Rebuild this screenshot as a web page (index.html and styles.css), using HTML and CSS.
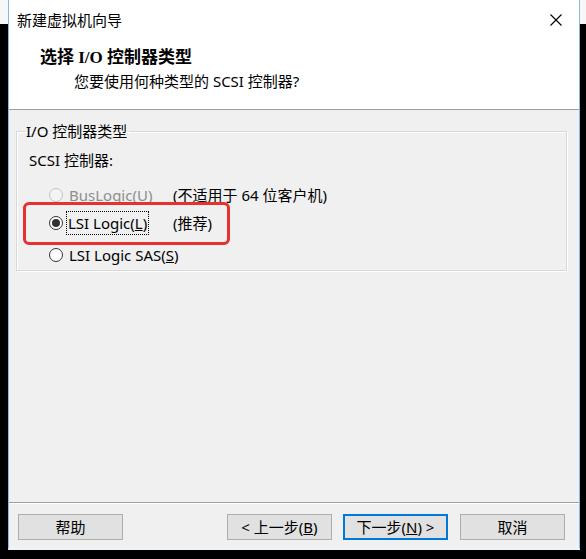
FILE: index.html
```html
<!DOCTYPE html>
<html lang="zh-CN">
<head>
<meta charset="utf-8">
<title>新建虚拟机向导</title>
<link rel="stylesheet" href="styles.css">
</head>
<body>
<div class="window">
  <div class="titlebar">
    <span class="title">新建虚拟机向导</span>
    <span class="close">
      <svg width="12" height="12" viewBox="0 0 12 12"><path d="M0.5 0.5 L11.5 11.5 M11.5 0.5 L0.5 11.5" stroke="#000" stroke-width="1.1" fill="none"/></svg>
    </span>
  </div>
  <div class="header">
    <div class="header-title">选择 I/O 控制器类型</div>
    <div class="header-sub">您要使用何种类型的 SCSI 控制器?</div>
  </div>
  <div class="content">
    <fieldset class="group">
      <legend class="group-label">I/O 控制器类型</legend>
      <div class="field-label">SCSI 控制器:</div>
      <div class="options">
        <div class="option disabled">
          <span class="radio"></span>
          <span class="opt-text">BusLogic(<u>U</u>)</span>
          <span class="opt-note">(不适用于 64 位客户机)</span>
        </div>
        <div class="option">
          <span class="radio checked"></span>
          <span class="opt-text"><span class="focus">LSI Logic(<u>L</u>)</span></span>
          <span class="opt-note">(推荐)</span>
        </div>
        <div class="option">
          <span class="radio"></span>
          <span class="opt-text">LSI Logic SAS(<u>S</u>)</span>
        </div>
      </div>
      <div class="highlight"></div>
    </fieldset>
    <div class="spacer"></div>
    <div class="footer">
      <button class="btn">帮助</button>
      <button class="btn btn-back">&lt; 上一步(<u>B</u>)</button>
      <button class="btn btn-default">下一步(<u>N</u>) &gt;</button>
      <button class="btn">取消</button>
    </div>
  </div>
</div>
</body>
</html>
```

FILE: styles.css
```css
html, body {
  margin: 0;
  padding: 0;
}
body {
  width: 586px;
  height: 559px;
  overflow: hidden;
  background: linear-gradient(to bottom, #f7f7f7 0, #f7f7f7 24px, #000 24px, #000 100%);
  font-family: "Noto Sans", "Noto Sans CJK SC", sans-serif;
  font-size: 15px;
  color: #000;
}
.window {
  margin-left: 8px;
  width: 572px;
  height: 550px;
  box-sizing: border-box;
  border: 1px solid #8ab8e6;
  border-top: none;
  border-bottom: 3px solid #eef3f8;
  background: #fff;
  display: flex;
  flex-direction: column;
}
.titlebar {
  height: 38px;
  display: flex;
  align-items: center;
  justify-content: space-between;
  padding-left: 8px;
  background: #fff;
}
.title {
  font-size: 15px;
  line-height: 20px;
  padding-top: 1px;
}
.close {
  width: 46px;
  height: 30px;
  display: flex;
  align-items: center;
  justify-content: center;
  padding-top: 1px;
}
.header {
  background: #fff;
  padding: 9px 0 18px 0;
  border-bottom: 1px solid #a0a0a0;
}
.header-title {
  font-family: "Liberation Serif", "Noto Sans CJK SC", serif;
  font-weight: bold;
  font-size: 17px;
  line-height: 22px;
  padding-left: 31px;
}
.header-sub {
  font-size: 15px;
  line-height: 20px;
  margin-top: 2px;
  padding-left: 65px;
}
.content {
  flex: 1;
  background: #f0f0f0;
  display: flex;
  flex-direction: column;
  padding-top: 11px;
}
.group {
  position: relative;
  margin: 0 12px 0 7px;
  padding: 9px 12px 5px 8px;
  border: 1px solid #d8d8d8;
  box-shadow: inset 1px 1px 0 #fff, 1px 1px 0 #fff;
  min-width: 0;
}
.group-label {
  padding: 0 2px 0 1px;
  line-height: 20px;
  font-size: 15px;
}
.field-label {
  line-height: 20px;
  margin-left: 4px;
}
.options {
  display: flex;
  flex-direction: column;
  margin-top: 15px;
  margin-left: 24px;
}
.option {
  display: flex;
  align-items: center;
  height: 20px;
}
.option + .option {
  margin-top: 8px;
}
.option:last-child {
  margin-top: 12px;
}
.radio {
  width: 14px;
  height: 14px;
  box-sizing: border-box;
  border-radius: 50%;
  border: 1px solid #333;
  background: #fff;
  margin-right: 6px;
  flex: none;
  display: flex;
  align-items: center;
  justify-content: center;
}
.radio.checked::after {
  content: "";
  width: 8px;
  height: 8px;
  border-radius: 50%;
  background: #333;
}
.disabled .radio {
  border-color: #c4c4c4;
  background: #f4f4f4;
}
.opt-text {
  width: 104px;
  flex: none;
  line-height: 20px;
  white-space: nowrap;
}
.disabled .opt-text {
  color: #8e8e8e;
}
.focus {
  display: inline-block;
  margin-left: -2px;
  padding: 1px;
  outline: 1px dotted #000;
  line-height: 20px;
}
.opt-note {
  line-height: 20px;
  white-space: nowrap;
}
.highlight {
  position: absolute;
  left: 6px;
  top: 61px;
  width: 207px;
  height: 43px;
  box-sizing: border-box;
  border: 3.5px solid #e8302f;
  border-radius: 6px;
}
.spacer {
  flex: 1;
}
.footer {
  display: flex;
  align-items: center;
  padding: 11px 14px 7px 9px;
  border-top: 1px solid #a0a0a0;
  box-shadow: inset 0 1px 0 #fff;
}
.btn {
  width: 105px;
  height: 26px;
  box-sizing: border-box;
  border: 1px solid #adadad;
  background: #e1e1e1;
  font-family: "Noto Sans", "Noto Sans CJK SC", sans-serif;
  font-size: 15px;
  line-height: 20px;
  padding: 0;
  color: #000;
}
.btn-back {
  margin-left: auto;
}
.btn-default {
  margin-left: 11px;
  border: 2px solid #0078d7;
}
.btn-default + .btn {
  margin-left: 12px;
}
```
